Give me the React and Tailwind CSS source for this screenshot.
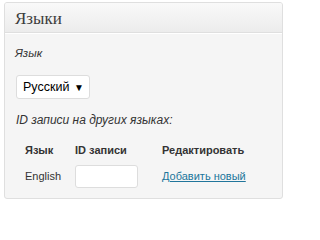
import React from "react";

const sans = { fontFamily: '"Liberation Sans", Arial, sans-serif' };

export default function App() {
  return (
    <div className="w-[289px] h-[203px] bg-white pt-[2px] pl-[4px]" style={sans}>
      <div className="w-[279px] h-[197px] border border-[#dfdfdf] rounded-[3px] bg-[#f5f5f5] overflow-hidden">
        {/* header */}
        <div className="h-[30px] bg-gradient-to-b from-[#f9f9f9] to-[#ececec] border-b border-[#dfdfdf] flex items-center pl-[10px]">
          <h3 className="text-[17px] leading-none text-[#3c3c3c] font-['Liberation_Serif',serif] pt-[1px]">
            Языки
          </h3>
        </div>

        {/* body */}
        <div className="bg-[#f5f5f5] border-t border-white px-[10px] pt-[12px] text-[#333]">
          <p className="italic text-[11.5px] leading-[14px] text-[#333]">Язык</p>

          <div className="mt-[15px] ml-[1px] w-[74px] h-[24px] bg-white border border-[#dddddd] rounded-[3px] flex items-center justify-between pl-[6px] pr-[5px]">
            <span className="text-[12.5px] text-black">Русский</span>
            <span className="text-[10px] text-black">▼</span>
          </div>

          <p className="italic text-[12px] leading-[14px] mt-[14px] ml-[1px] text-[#333]">
            ID записи на других языках:
          </p>

          <table className="mt-[15px] ml-[10px] text-[11px] border-collapse">
            <thead>
              <tr className="h-[14px]">
                <th className="text-left font-bold w-[50px] p-0">Язык</th>
                <th className="text-left font-bold w-[87px] p-0">ID записи</th>
                <th className="text-left font-bold p-0">Редактировать</th>
              </tr>
            </thead>
            <tbody>
              <tr>
                <td className="p-0 pt-[6px]">English</td>
                <td className="p-0 pt-[6px]">
                  <div className="w-[63px] h-[23px] bg-white border border-[#dddddd] rounded-[3px]" />
                </td>
                <td className="p-0 pt-[6px]">
                  <a className="text-[#21759b] underline cursor-pointer">Добавить новый</a>
                </td>
              </tr>
            </tbody>
          </table>
        </div>
      </div>
    </div>
  );
}
